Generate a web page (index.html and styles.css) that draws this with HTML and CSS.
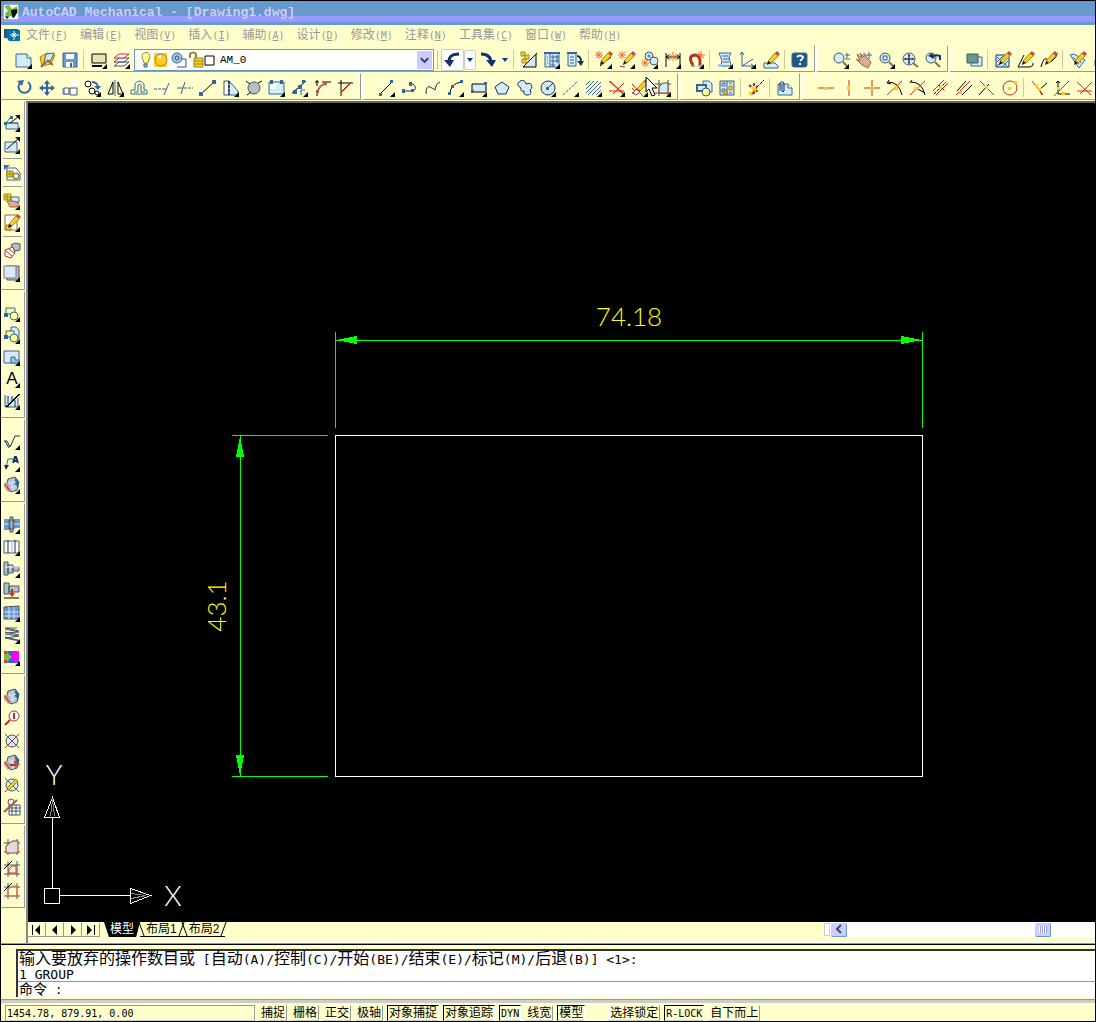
FILE: index.html
```
<!DOCTYPE html>
<html lang="zh-CN">
<head>
  <meta charset="UTF-8" />
  <meta name="viewport" content="width=device-width, initial-scale=1.0"/>
  <title>AutoCAD Mechanical - [Drawing1.dwg]</title>
  <link rel="stylesheet" href="styles.css">
</head>
<body>
  <!-- shared icon parts -->
  <svg class="defs" aria-hidden="true">
    <symbol id="pencil" viewBox="0 0 18 18"><path class="fy by" d="M6 10L13 2l3 3-7 7z"/><path class="fr n" d="M13 2l2-2 3 3-2 2z"/><path class="fk n" d="M6 10l3 2-4 2z"/></symbol>
    <symbol id="lens" viewBox="0 0 18 18"><path class="br t" d="M11 11l5 5"/><circle class="fb dk" cx="7" cy="7" r="5"/></symbol>
    <symbol id="gear" viewBox="0 0 18 18"><path class="fg dk" d="M5 3l7-2 4 5-2 8-6 2-5-5z"/><path class="fn n" d="M12 1l4 5-1 7-3-5z"/><path class="lt" d="M6 5l5 8M9 3l1 12M5 8l8-2M6 12l8-2"/><path class="fr2 n" d="M1 7l4 0 3 8-3 1-4-5z"/><path class="rr" d="M2 8l5 7"/></symbol>
    <symbol id="spark" viewBox="0 0 18 18"><path class="or" d="M4 0v8M0 4h8M1 1l6 6M7 1L1 7"/></symbol>
    <symbol id="grid" viewBox="0 0 18 18"><path class="dk" d="M5 1v16M14 1v16M1 5h16M1 14h16"/></symbol>
  </svg>

  <div class="window">
    <header class="titlebar">
      <svg class="app-icon" viewBox="0 0 16 16"><path class="fw" d="M0 0h16v16H0z"/><path class="fgr n" d="M1 2l5-1 3 4 5-3 1 7-4-1-3 4-5 2-1-5 3-2z"/><path class="fk n" d="M8 6l6-1v4l-3 5-2-1zM2 12l4 1-2 2z"/></svg>
      <h1>AutoCAD Mechanical - [Drawing1.dwg]</h1>
    </header>

    <nav class="menubar">
      <svg class="doc-icon" viewBox="0 0 16 14"><path class="fn2 n" d="M0 1h14v9H0z"/><path class="ft n" d="M3 2h13v11H5l-2-3z"/><path class="wt" d="M10 3v9M6 7h9M8 5l4 4M12 5L8 9"/></svg>
      <button>文件<span>(<u>F</u>)</span></button>
      <button>编辑<span>(<u>E</u>)</span></button>
      <button>视图<span>(<u>V</u>)</span></button>
      <button>插入<span>(<u>I</u>)</span></button>
      <button>辅助<span>(<u>A</u>)</span></button>
      <button>设计<span>(<u>D</u>)</span></button>
      <button>修改<span>(<u>M</u>)</span></button>
      <button>注释<span>(<u>N</u>)</span></button>
      <button>工具集<span>(<u>C</u>)</span></button>
      <button>窗口<span>(<u>W</u>)</span></button>
      <button>帮助<span>(<u>H</u>)</span></button>
    </nav>

    <div class="toolrow">
      <div class="group">
        <button class="tool fly" aria-label="新建"><svg viewBox="0 0 18 18"><path class="fb" d="M1 3h11l4 4v9H1z"/><path class="fw" d="M12 3v4h4"/></svg></button>
        <button class="tool" aria-label="打开"><svg viewBox="0 0 18 18"><path class="fy by" d="M2 6l7-4 8 2-4 9-9 2z"/><path class="fb" d="M8 3l8-1-3 7-7 3z"/><path class="br t" d="M3 16l5-5M9 9l6 5"/></svg></button>
        <button class="tool" aria-label="保存"><svg viewBox="0 0 18 18"><path class="fbb2" d="M2 2h14v14H2z"/><path class="fw n" d="M5 3h8v5H5zM5 11h7v5H5z"/><path class="fn n" d="M9 12h2v4H9z"/></svg></button>
        <i class="sep"></i>
        <button class="tool fly" aria-label="布局"><svg viewBox="0 0 18 18"><path class="fy3 k" d="M2 3h14v9H2z"/><path class="k t" d="M2 15h10"/></svg></button>
        <button class="tool fly" aria-label="图层"><svg viewBox="0 0 18 18"><path class="fw dk" d="M1 15l5-4h10l-5 4zM1 11l5-4h10l-5 4z"/><path class="fw r" d="M1 7l5-4h10l-5 4z"/></svg></button>
        <div class="layer">
          <select aria-label="图层"><option>AM_0</option></select>
          <svg class="layer-icons" viewBox="0 0 76 18"><path class="fy2 by" d="M3 6a4 4 0 1 1 7 2l-1 4H5L4 9z"/><path class="fg dk" d="M5 13h3v3H5z"/><path class="fy n" d="M15 2h13v14H15z"/><circle class="fy by" cx="22" cy="9" r="6"/><path class="fw n" d="M18 6l4-2v4z"/><path class="fw dk" d="M41 8h6v8h-9"/><circle class="ft2" cx="38" cy="7" r="5"/><circle class="dk" cx="38" cy="7" r="2"/><path class="by t" d="M51 7V3q3-3 6 0v4"/><path class="fy by" d="M55 7h9v9h-9z"/><path class="by" d="M55 10h9M55 13h9"/><path class="fw k" d="M66 5h9v9h-9z"/></svg>
          <svg class="chevron" viewBox="0 0 16 18"><path d="M4 7l4 4 4-4"/></svg>
        </div>
        <i class="sep"></i>
        <button class="tool raised" aria-label="放弃"><svg viewBox="0 0 18 18"><path class="nv t3" d="M5 12Q4 3 15 3"/><path class="fnv n" d="M0 9h10l-4 7z"/></svg></button>
        <button class="drop raised" aria-label="放弃列表"><svg viewBox="0 0 6 4"><path d="M0 0h6L3 4z"/></svg></button>
        <button class="tool" aria-label="重做"><svg viewBox="0 0 18 18"><path class="nv t3" d="M2 3q10 0 10 9"/><path class="fnv n" d="M7 9h10l-4 7z"/></svg></button>
        <button class="drop" aria-label="重做列表"><svg viewBox="0 0 6 4"><path d="M0 0h6L3 4z"/></svg></button>
        <i class="sep"></i>
        <button class="tool" aria-label="特性"><svg viewBox="0 0 18 18"><path class="fb k" d="M3 16L16 3v13z"/><path class="k" d="M3 16L17 2"/><path class="fy by" d="M1 1h4v4H1zM5 4h4v4H5zM2 8h4v4H2z"/></svg></button>
        <button class="tool fly" aria-label="设计中心"><svg viewBox="0 0 18 18"><path class="fb" d="M2 2h14v14H2z"/><path class="t" d="M1 2h16"/><path d="M7 2v14M4 6h1M4 9h1M4 12h1M9 5h2v2H9zM13 5h2v2h-2zM9 9h2v2H9zM13 9h2v2h-2zM9 13h2v2H9z"/></svg></button>
        <button class="tool" aria-label="明细"><svg viewBox="0 0 18 18"><path class="fb" d="M2 2h8v13H2z"/><path class="t" d="M1 2h10"/><path d="M4 6h4M4 9h4M4 12h4"/><path class="nv t" d="M11 5q4 0 4 6"/><path class="fnv n" d="M11 10h7l-3 5z"/></svg></button>
        <i class="sep"></i>
        <button class="tool fly" aria-label="编辑一"><svg viewBox="0 0 18 18"><path class="k" d="M5 15l11-9"/><use href="#pencil"/><use href="#spark"/></svg></button>
        <button class="tool fly" aria-label="编辑二"><svg viewBox="0 0 18 18"><path class="r" d="M2 15l5 1"/><use href="#pencil"/><use href="#spark"/></svg></button>
        <button class="tool fly" aria-label="编辑三"><svg viewBox="0 0 18 18"><circle class="fb dk" cx="8" cy="5" r="4"/><circle class="fb dk" cx="13" cy="10" r="4"/><circle class="fw dk" cx="8" cy="5" r="1"/><use class="low" href="#spark"/></svg></button>
        <button class="tool fly" aria-label="编辑尺寸"><svg viewBox="0 0 18 18"><path class="k" d="M2 2v14M16 2v14M2 6h14M5 4L2 6l3 2M13 4l3 2-3 2"/><path class="or" d="M9 1v9M5 3l8 6M13 3L5 9"/></svg></button>
        <button class="tool fly" aria-label="超级编辑"><svg viewBox="0 0 18 18"><path class="rr t3" d="M6 14Q0 5 8 4q6 0 5 10"/><path class="dk" d="M4 15h4M11 15h5"/><path class="or" d="M14 0v8M10 4h8M11 1l6 6"/></svg></button>
        <i class="sep"></i>
        <button class="tool fly" aria-label="列表"><svg viewBox="0 0 18 18"><path class="fb" d="M3 2h12l-2 4 2 9H5l1-5z"/><path d="M6 5h6M7 8h6M7 11h6"/><path class="ft2 n" d="M2 13h4v3H2z"/></svg></button>
        <button class="tool fly" aria-label="坐标"><svg viewBox="0 0 18 18"><path d="M3 1v14h12M3 15L14 8M1 4l2-3 2 3M12 13l3 2-3 2"/></svg></button>
        <button class="tool" aria-label="绘图"><svg viewBox="0 0 18 18"><path class="fb" d="M2 12h11l3 3v2H2z"/><use href="#pencil"/></svg></button>
        <i class="sep"></i>
        <button class="tool" aria-label="帮助"><svg viewBox="0 0 18 18"><rect class="fn2" x="1" y="2" width="15" height="14" rx="2"/><path class="wt t" d="M6 6q3-3 6 0 0 2-3 4M9 12v2"/></svg></button>
      </div>
      <div class="group">
        <button class="tool fly" aria-label="实时缩放"><svg viewBox="0 0 18 18"><use href="#lens"/><path d="M13 4h5M15 2v5M13 8h5"/></svg></button>
        <button class="tool" aria-label="平移"><svg viewBox="0 0 18 18"><path class="fh br" d="M2 3l5 4-2-5 4 4V2l3 5 4 4-3 6-6-3-6-6 4 2z"/><path d="M14 1v7M11 4h6"/></svg></button>
        <button class="tool fly" aria-label="窗口缩放"><svg viewBox="0 0 18 18"><use href="#lens"/><path d="M5 5h4v4H5z"/></svg></button>
        <button class="tool" aria-label="范围缩放"><svg viewBox="0 0 18 18"><path class="br t" d="M12 12l5 4"/><circle class="fb dk" cx="8" cy="8" r="6"/><path class="k" d="M8 4v8M4 8h8M7 4h2M7 12h2M4 7v2M12 7v2"/></svg></button>
        <button class="tool" aria-label="上一个缩放"><svg viewBox="0 0 18 18"><use href="#lens"/><path class="nv t" d="M8 7q2-4 8-2v4"/><path class="fnv n" d="M4 5l4-3 3 6z"/></svg></button>
      </div>
      <div class="group">
        <button class="tool" aria-label="绘图次序"><svg viewBox="0 0 18 18"><path class="fb" d="M6 6h11v9H6z"/><path class="fgn dk" d="M2 3h11v9H2z"/></svg></button>
        <i class="sep"></i>
        <button class="tool" aria-label="编辑填充"><svg viewBox="0 0 18 18"><path class="fb nv" d="M2 4h13v12H2z"/><path d="M3 15L14 5M3 11l6-6M9 15l5-5M3 6l10 9"/><use href="#pencil"/></svg></button>
        <button class="tool" aria-label="编辑多段线"><svg viewBox="0 0 18 18"><path class="k" d="M1 16h12q4-1 3-4M1 16L7 4"/><use href="#pencil"/></svg></button>
        <button class="tool" aria-label="编辑样条"><svg viewBox="0 0 18 18"><path class="k" d="M1 16Q4 4 8 9q1 4 5 0 4-3 4-7"/><use href="#pencil"/></svg></button>
        <i class="sep"></i>
        <button class="tool" aria-label="编辑属性"><svg viewBox="0 0 18 18"><path class="fb" d="M1 4l4-1 11 6-6 8z"/><path d="M4 6l6 7M8 6l4 6"/><use href="#pencil"/></svg></button>
        <button class="tool" aria-label="块"><svg viewBox="0 0 18 18"><path class="fb" d="M3 9l5-3 6 3v6H3z"/></svg></button>
      </div>
    </div>

    <div class="toolrow">
      <div class="group">
        <button class="tool" aria-label="旋转"><svg viewBox="0 0 18 18"><path class="t" d="M6 3a6 6 0 1 0 7 0"/><path class="fn n" d="M2 2l7-1-2 6z"/></svg></button>
        <button class="tool" aria-label="移动"><svg viewBox="0 0 18 18"><path class="t" d="M9 3v12M3 9h12"/><path class="fn n" d="M9 1l3 4H6zM9 17l3-4H6zM1 9l4-3v6zM17 9l-4-3v6z"/></svg></button>
        <button class="tool" aria-label="缩放"><svg viewBox="0 0 18 18"><path class="fg n" d="M1 9h7v7H1z"/><path class="fw n" d="M10 1h7v6h-7z"/><path class="fw dk" d="M3 9h5v6H3zM9 9h7v7H9z"/></svg></button>
        <button class="tool fly" aria-label="复制"><svg viewBox="0 0 18 18"><circle class="fw k" cx="4" cy="5" r="3"/><circle class="fw k" cx="8" cy="12" r="3"/><circle class="fw k" cx="13" cy="14" r="2"/><path class="t" d="M8 3q5 0 6 5"/><path class="fn n" d="M10 7h7l-3 4z"/></svg></button>
        <button class="tool fly" aria-label="镜像"><svg viewBox="0 0 18 18"><path class="k" d="M1 15L6 3v12zM16 15L11 3v12z"/><path d="M8 1v16"/></svg></button>
        <button class="tool" aria-label="偏移"><svg viewBox="0 0 18 18"><path d="M1 15v-4h4V5q4-6 9 0v6h3v4z"/><path d="M4 13h4V6q2-2 3 0v7h4"/></svg></button>
        <button class="tool" aria-label="修剪"><svg viewBox="0 0 18 18"><path class="dash" d="M1 10h9"/><path d="M10 10h3M11 16l5-12"/></svg></button>
        <button class="tool" aria-label="延伸"><svg viewBox="0 0 18 18"><path d="M1 9h6M5 15l4-12"/><path class="dash" d="M8 9h9"/></svg></button>
        <button class="tool" aria-label="打断"><svg viewBox="0 0 18 18"><path class="k" d="M2 15L15 3"/><path class="fn n" d="M0 13h4v4H0zM13 1h4v4h-4z"/></svg></button>
        <button class="tool fly" aria-label="拉伸"><svg viewBox="0 0 18 18"><path class="fw dk" d="M2 2h5v14H2z"/><path class="fb" d="M7 2l9 10v4H7z"/><path class="k dash" d="M7 2v14"/></svg></button>
        <button class="tool" aria-label="圆"><svg viewBox="0 0 18 18"><circle class="fg dk" cx="9" cy="9" r="6"/><path class="k" d="M1 2l4 3M2 16l4-3M13 4l4-2"/></svg></button>
        <button class="tool fly" aria-label="打断于点"><svg viewBox="0 0 18 18"><path class="fb" d="M1 3h15v12H1z"/><path class="fw n" d="M2 4h8l-3 6H2z"/><path class="fn n" d="M2 1h3v4H2zM12 1h3v4h-3z"/></svg></button>
        <button class="tool fly" aria-label="阵列"><svg viewBox="0 0 18 18"><path class="k" d="M1 14L15 2"/><path class="fn n" d="M2 11h4v4H2zM7 6h4v4H7zM11 1h3v3h-3z"/><path d="M10 16v-5h4"/></svg></button>
        <button class="tool" aria-label="圆角"><svg viewBox="0 0 18 18"><path class="k" d="M3 1v6M1 3h4M8 3h9M3 11v6"/><path class="r" d="M3 14Q4 5 13 4M4 14Q5 6 13 5"/></svg></button>
        <button class="tool" aria-label="倒角"><svg viewBox="0 0 18 18"><path class="k" d="M4 1v16M1 4h15"/><path class="r" d="M4 13L13 4M5 13L14 4"/></svg></button>
      </div>
      <div class="group">
        <button class="tool fly" aria-label="直线"><svg viewBox="0 0 18 18"><path class="k" d="M2 15L14 3"/><path class="fn n" d="M1 14h3v3H1zM12 1h3v3h-3z"/></svg></button>
        <button class="tool" aria-label="多段线"><svg viewBox="0 0 18 18"><path class="nv" d="M2 12h10q5-3 0-7h-2"/><path class="fn n" d="M1 10h3v4H1zM8 3h3v4H8zM10 10h3v3h-3z"/></svg></button>
        <button class="tool" aria-label="样条曲线"><svg viewBox="0 0 18 18"><path class="nv" d="M2 15q0-9 4-7t5 3q1-7 5-8"/></svg></button>
        <button class="tool fly" aria-label="圆弧"><svg viewBox="0 0 18 18"><path class="k" d="M3 15Q3 5 14 3"/><path class="fn n" d="M1 13h3v3H1zM4 6h3v3H4zM13 1h3v3h-3z"/></svg></button>
        <button class="tool fly" aria-label="矩形"><svg viewBox="0 0 18 18"><path class="fb k" d="M2 5h14v8H2z"/><path class="fn n" d="M1 11h3v3H1zM14 3h3v3h-3z"/></svg></button>
        <button class="tool" aria-label="多边形"><svg viewBox="0 0 18 18"><path class="fb nv" d="M9 3l7 5-3 7H5L2 8z"/></svg></button>
        <button class="tool" aria-label="修订云线"><svg viewBox="0 0 18 18"><path class="fb nv" d="M5 9Q-1 6 4 2q5-2 6 3 5-2 6 2 0 3-2 4 3 5-3 5-4 0-3-4-4 1-3-3"/></svg></button>
        <button class="tool fly" aria-label="圆"><svg viewBox="0 0 18 18"><circle class="fb nv" cx="9" cy="9" r="7"/><path class="nv" d="M9 9l5-5"/><path class="fn n" d="M7 8h3v3H7z"/></svg></button>
        <button class="tool fly" aria-label="中心线"><svg viewBox="0 0 18 18"><path class="dash" d="M1 16L16 2"/></svg></button>
        <button class="tool fly" aria-label="图案填充"><svg viewBox="0 0 18 18"><path d="M1 6l4-4M1 10l8-8M1 14l12-12M3 16L16 3M7 16l9-9M11 16l5-5"/></svg></button>
        <button class="tool fly" aria-label="中心十字"><svg viewBox="0 0 18 18"><path class="r" d="M1 2l14 13M1 12h15M16 4L5 15M2 2l14 13"/></svg></button>
        <button class="tool fly" aria-label="删除"><svg viewBox="0 0 18 18"><path class="r" d="M1 5l11 12M1 9l6 6"/><path class="k" d="M1 14h6"/><use href="#pencil"/><path class="fw rr" d="M5 10l4 3-4 3-3-2z"/></svg></button>
        <button class="tool fly" aria-label="轮廓"><svg viewBox="0 0 18 18"><use href="#grid"/><path class="fb rr" d="M5 14V8l4-4h5v10z"/></svg></button>
      </div>
      <div class="group">
        <button class="tool" aria-label="插入块"><svg viewBox="0 0 18 18"><path class="fb" d="M8 2h6l3 3v8H8z"/><path class="fb t" d="M2 6h9v6H2z"/><circle class="fy2 dk" cx="11" cy="13" r="4"/></svg></button>
        <button class="tool" aria-label="零件库"><svg viewBox="0 0 18 18"><path class="fb dk" d="M2 2h14v14H2z"/><path d="M9 2v14M4 4h3v3H4zM4 10h3v3H4zM11 4h3M11 14h3"/><path class="fy by" d="M11 7h3v4h-3zM6 12h3v3H6z"/></svg></button>
        <i class="sep"></i>
        <button class="tool" aria-label="分解"><svg viewBox="0 0 18 18"><path class="rr t dash" d="M2 6l9 7M4 16l7-10M7 4v12"/><path class="fy n" d="M5 8h4v4H5zM2 13h3v3H2z"/><path class="k dash" d="M10 8l7-7"/></svg></button>
        <i class="sep"></i>
        <button class="tool" aria-label="附着"><svg viewBox="0 0 18 18"><path class="fb" d="M2 5h10l4 4v7H2z"/><path class="fw" d="M12 5v4h4"/><path class="nv" d="M4 12V4q2-3 4 0v8q-1 2-2 0V6"/></svg></button>
      </div>
      <div class="group">
        <button class="tool" aria-label="水平构造线"><svg viewBox="0 0 18 18"><path class="r" d="M1 9h16"/><path class="fy n" d="M7 8h4v3H7z"/></svg></button>
        <button class="tool" aria-label="垂直构造线"><svg viewBox="0 0 18 18"><path class="rr" d="M9 1v16"/><path class="fy n" d="M7 7h3v4H7z"/></svg></button>
        <button class="tool" aria-label="十字构造线"><svg viewBox="0 0 18 18"><path class="rr" d="M9 1v16M1 9h16"/><path class="fy n" d="M7 8h4v3H7z"/></svg></button>
        <button class="tool" aria-label="角度线"><svg viewBox="0 0 18 18"><path class="k" d="M2 3q11 0 14 13M3 1L1 4l4 1"/><path class="r" d="M1 16L16 2"/><path class="fy n" d="M8 7h4v4H8z"/></svg></button>
        <button class="tool" aria-label="相对角度线"><svg viewBox="0 0 18 18"><path class="k" d="M2 3q11 0 14 13M3 1L1 4M7 9l9 5"/><path class="r" d="M1 16L16 2"/><path class="fy n" d="M5 8h4v3H5z"/></svg></button>
        <button class="tool" aria-label="平行线"><svg viewBox="0 0 18 18"><path class="r" d="M1 12L12 1M4 16L16 4"/><path class="k dash" d="M2 15L14 3M7 6l6 6"/><path class="fy n" d="M7 7h3v3H7z"/></svg></button>
        <button class="tool" aria-label="半距平行线"><svg viewBox="0 0 18 18"><path class="r" d="M1 16L15 2"/><path class="k" d="M2 12l9-10M7 16L17 6"/><path class="fy n" d="M4 12h3v3H4z"/></svg></button>
        <button class="tool" aria-label="垂线"><svg viewBox="0 0 18 18"><path class="k" d="M1 16L11 5"/><path class="r" d="M2 2l14 14"/><path class="fy n" d="M7 7h3v3H7z"/></svg></button>
        <button class="tool" aria-label="构造圆"><svg viewBox="0 0 18 18"><circle class="r" cx="9" cy="9" r="7"/><path class="fy n" d="M7 8h3v3H7zM13 2h3v3h-3z"/></svg></button>
        <i class="sep"></i>
        <button class="tool" aria-label="切线"><svg viewBox="0 0 18 18"><path class="k" d="M9 11l8-7M9 10l3 6"/><path class="r" d="M2 2l11 14"/><path class="fy n" d="M5 5h3v3H5zM8 9h3v3H8z"/></svg></button>
        <button class="tool" aria-label="角平分线"><svg viewBox="0 0 18 18"><path class="k" d="M5 2v13h12M3 4l2-2 2 2"/><path class="r" d="M1 17L16 2"/><path class="fy n" d="M9 13h3v3H9zM4 8h3v3H4z"/></svg></button>
        <button class="tool" aria-label="构造线相交"><svg viewBox="0 0 18 18"><path class="r" d="M1 3l14 13M1 12h15M16 3L4 15"/></svg></button>
      </div>
    </div>

    <div class="workspace">
      <aside class="sidebar">
        <div class="vgroup">
          <button class="tool fly" aria-label="三维一"><svg viewBox="0 0 18 18"><path class="fb" d="M3 9h12v6H3z"/><path d="M3 9l5-6M3 9l12 0"/><path class="k" d="M7 9l8-6"/><path class="fk n" d="M12 1h5v5z"/><path class="fn n" d="M1 8h3v3H1zM7 2h3v3H7z"/></svg></button>
          <button class="tool fly" aria-label="三维二"><svg viewBox="0 0 18 18"><path class="fb" d="M2 6h12v10H2z"/><path class="k" d="M4 13L15 3"/><path class="fk n" d="M12 1h5v5z"/></svg></button>
          <i class="hsep"></i>
          <button class="tool" aria-label="视图"><svg viewBox="0 0 18 18"><path class="fw" d="M4 4h9l4 5v7H4z"/><path class="fbb n" d="M1 1h6L1 6z"/><path class="fy by" d="M4 7h6v6H4z"/><path class="by" d="M7 7v6M4 10h6"/><circle class="fy2 dk" cx="13" cy="12" r="3"/></svg></button>
          <i class="hsep"></i>
          <button class="tool fly" aria-label="零件"><svg viewBox="0 0 18 18"><path class="fy by" d="M1 2h7v6H1zM4 2v6M1 5h7"/><path class="fb" d="M8 5h8v5H8z"/><path class="fh br" d="M4 9h7l5 2-2 4H7z"/></svg></button>
          <button class="tool fly" aria-label="零件编辑"><svg viewBox="0 0 18 18"><path class="fw br" d="M2 1h12v15H2z"/><path class="fy by" d="M3 11h5v5H3z"/><use href="#pencil"/></svg></button>
          <i class="hsep"></i>
          <button class="tool" aria-label="装配"><svg viewBox="0 0 18 18"><path class="fg dk" d="M8 3l4-2 5 1v6l-5 1z"/><path class="fw rr" d="M2 8l8-3 2 6-4 5-6-2z"/><path class="rr" d="M3 9l6 5M6 7l5 4"/></svg></button>
          <button class="tool fly" aria-label="图框"><svg viewBox="0 0 18 18"><path class="fg dk" d="M4 2h12v14H4z"/><path class="fb pu" d="M1 2h12v12H1z"/></svg></button>
        </div>
        <div class="vgroup">
          <button class="tool fly" aria-label="创建块"><svg viewBox="0 0 18 18"><path class="fy2" d="M3 4h9v6H3z"/><circle class="fy2" cx="11" cy="12" r="4"/><path class="fn n" d="M1 9h4v4H1z"/></svg></button>
          <button class="tool fly" aria-label="插入"><svg viewBox="0 0 18 18"><path class="fb" d="M8 1h5l3 3v9H8z"/><path class="fy2" d="M3 5h8v6H3z"/><circle class="fy2" cx="11" cy="12" r="4"/><path class="fn n" d="M1 9h4v4H1z"/></svg></button>
          <button class="tool fly" aria-label="区域"><svg viewBox="0 0 18 18"><path class="fb" d="M1 3h15v12H1z"/><path class="ft2" d="M8 9h4v3h4v3H8z"/></svg></button>
          <button class="tool fly letter" aria-label="多行文字">A</button>
          <button class="tool fly" aria-label="尺寸标注"><svg viewBox="0 0 18 18"><path class="fb dk" d="M2 3v12h13V6"/><path class="nv" d="M5 4v8M9 4v5M3 13l3 2M12 8v7"/><path class="k" d="M3 15L16 2M4 15L17 2"/></svg></button>
        </div>
        <div class="vgroup">
          <button class="tool fly" aria-label="表面粗糙度"><svg viewBox="0 0 18 18"><path class="nv" d="M1 9h3l3 6 5-11h5M2 9l4 7"/></svg></button>
          <button class="tool fly" aria-label="引线"><svg viewBox="0 0 18 18"><path d="M3 14L5 5h5"/><path class="fnv n" d="M1 11h5l-3 5z"/><path class="nv t" d="M10 9l2-6h1l2 6M11 7h4"/></svg></button>
          <button class="tool fly" aria-label="引出序号"><svg viewBox="0 0 18 18"><use href="#gear"/></svg></button>
        </div>
        <div class="vgroup">
          <button class="tool fly" aria-label="螺钉连接"><svg viewBox="0 0 18 18"><path class="fbb2 n" d="M1 3h5v11H1zM11 3h6v9h-6z"/><path class="fg dk" d="M6 4h5v9H6zM7 1h3v15H7z"/><path class="lt" d="M1 8h5M11 8h6"/></svg></button>
          <button class="tool fly" aria-label="孔"><svg viewBox="0 0 18 18"><path class="fw dk" d="M1 3h15v12H1z"/><path class="nv" d="M5 2v13M12 2v13"/><path class="g" d="M9 2v14"/></svg></button>
          <button class="tool fly" aria-label="轴生成器"><svg viewBox="0 0 18 18"><path class="fg dk" d="M1 2h4v13H1zM5 5h5v8H5zM10 7h6v4h-6z"/><path class="wt" d="M2 7h14"/></svg></button>
          <button class="tool" aria-label="轴承"><svg viewBox="0 0 18 18"><path class="fg dk" d="M1 1h5v11H1zM6 4h10v6H6z"/><path class="r t" d="M9 7v5"/><path class="fred n" d="M6 11h6l-3 4z"/><path class="k" d="M1 16h15"/></svg></button>
          <button class="tool fly" aria-label="有限元"><svg viewBox="0 0 18 18"><path class="fbb2 dk" d="M1 3l15-1v13H1z"/><path class="lt" d="M1 8h15M1 12h15M6 3v12M11 3v12"/></svg></button>
          <button class="tool fly" aria-label="弹簧"><svg viewBox="0 0 18 18"><path class="dk" d="M2 2h12M2 3l14 3M16 6L2 7M2 8l14 2M16 10L2 12M2 12l14 3M3 2l13 3M2 6l14 3M2 11l13 3"/></svg></button>
          <button class="tool fly" aria-label="应力分析"><svg viewBox="0 0 18 18"><path class="fgr n" d="M1 3h6v12H1z"/><path class="fbb n" d="M4 3h12v12H4l4-6z"/><path class="fm n" d="M10 3h6v9l-4 3-4-6z"/><path class="fr n" d="M1 3h3v3H1zM1 12h3v3H1z"/></svg></button>
        </div>
        <div class="vgroup">
          <button class="tool" aria-label="零件参照"><svg viewBox="0 0 18 18"><use href="#gear"/></svg></button>
          <button class="tool" aria-label="引出"><svg viewBox="0 0 18 18"><path class="rr t" d="M2 15l5-5"/><circle class="fw rr" cx="11" cy="6" r="5"/><path class="rr t" d="M11 3v6"/></svg></button>
          <button class="tool" aria-label="删除引出"><svg viewBox="0 0 18 18"><circle class="fb dk" cx="9" cy="9" r="6"/><path class="rr" d="M2 2l14 14M16 2L2 16"/></svg></button>
          <button class="tool" aria-label="编辑零件参照"><svg viewBox="0 0 18 18"><use href="#gear"/><path class="rr t" d="M7 11h7"/><path class="fr n" d="M11 6l6 4-5 4z"/></svg></button>
          <button class="tool" aria-label="编辑引出"><svg viewBox="0 0 18 18"><circle class="fb dk" cx="9" cy="9" r="6"/><path class="rr" d="M2 2l14 14M2 16l3-3"/><path class="fy by" d="M4 12L13 3l2 2-9 9z"/></svg></button>
          <button class="tool" aria-label="明细表"><svg viewBox="0 0 18 18"><path class="fw dk" d="M6 7h11v10H6zM6 10h11M6 13h11M9 7v10M13 7v10"/><circle class="fw rr" cx="8" cy="4" r="3"/><path class="br t" d="M1 14L14 2"/></svg></button>
        </div>
        <div class="vgroup">
          <button class="tool" aria-label="外轮廓"><svg viewBox="0 0 18 18"><use href="#grid"/><path class="fgl rr" d="M3 15V8l6-5h6v12z"/></svg></button>
          <button class="tool" aria-label="内轮廓"><svg viewBox="0 0 18 18"><use href="#grid"/><path class="r" d="M6 13V9l3-3h4v7z"/><path class="k" d="M1 9l8-8"/></svg></button>
          <button class="tool" aria-label="轮廓线"><svg viewBox="0 0 18 18"><use href="#grid"/><path class="or" d="M5 14V8l4-4h5v10z"/><path class="k" d="M1 9l8-8"/></svg></button>
        </div>
      </aside>

      <main class="view">
        <svg class="drawing">
          <g transform="translate(-28 -103)">
            <path class="outline" d="M335.500 435.500h587v341h-587z"/>
            <g class="dim">
              <path d="M335.500 332v96M922.500 332v96M336 340.500h586M232 435.500h96M232 776.500h96M240.500 436v340"/>
              <path class="head" d="M336 340l21-4v8zM922 340l-21-4v8zM240 436l-4 21h8zM240 776l-4-21h8z"/>
            </g>
            <text class="dimtext" x="629" y="326" text-anchor="middle">74.18</text>
            <text class="dimtext" transform="translate(226 606) rotate(-90)" text-anchor="middle">43.1</text>
            <g class="ucs">
              <path d="M44.500 888.500h15v15h-15zM52.500 888V817M60 895.500h70"/>
              <path d="M44.500 817.500h15l-7-20zM130.500 888.500v15l20-8z"/>
              <path class="shade" d="M50.500 816l2-16M54.500 816l-2-16M131 893.500l15 2M131 898.500l15-3"/>
            </g>
            <text class="axis" x="54" y="785" text-anchor="middle">Y</text>
            <text class="axis" x="173" y="906" text-anchor="middle">X</text>
          </g>
        </svg>

        <div class="tabrow">
          <div class="tabnav">
            <button aria-label="第一个"><svg viewBox="0 0 10 10"><path d="M0 0h1v10H0zM8 0v10L3 5z"/></svg></button>
            <button aria-label="上一个"><svg viewBox="0 0 10 10"><path d="M7 0v10L2 5z"/></svg></button>
            <button aria-label="下一个"><svg viewBox="0 0 10 10"><path d="M3 0v10l5-5z"/></svg></button>
            <button aria-label="最后一个"><svg viewBox="0 0 10 10"><path d="M1 0v10l5-5zM8 0h1v10H8z"/></svg></button>
          </div>
          <div class="tabs">
            <button class="tab active">模型</button>
            <button class="tab">布局1</button>
            <button class="tab">布局2</button>
          </div>
          <div class="scroll">
            <span class="splitter"></span>
            <button class="arrow" aria-label="向左"><svg viewBox="0 0 8 10"><path d="M6 1L2 5l4 4"/></svg></button>
            <span class="thumb"></span>
          </div>
        </div>
      </main>
    </div>

    <section class="command">
      <div class="console">
        <p>输入要放弃的操作数目或<span> [</span>自动<span>(A)/</span>控制<span>(C)/</span>开始<span>(BE)/</span>结束<span>(E)/</span>标记<span>(M)/</span>后退<span>(B)] &lt;1&gt;:</span></p>
        <p><span>1 GROUP</span></p>
        <div class="prompt">
          <label for="cmd">命令<span> :</span></label>
          <input type="text" id="cmd">
        </div>
      </div>
    </section>

    <footer class="statusbar">
      <div class="coords">1454.78, 879.91, 0.00</div>
      <button>捕捉</button>
      <button>栅格</button>
      <button>正交</button>
      <button>极轴</button>
      <button class="on">对象捕捉</button>
      <button class="on">对象追踪</button>
      <button class="on en">DYN</button>
      <button>线宽</button>
      <button class="on">模型</button>
      <i class="space"></i>
      <button>选择锁定</button>
      <button class="on en">R-LOCK</button>
      <button>自下而上</button>
    </footer>

    <svg class="cursor" viewBox="0 0 13 21"><path d="M1 1v15l3-3 3 7 3-1-3-7h5z"/></svg>
  </div>
</body>
</html>
```
FILE: styles.css
```
* {
  margin: 0; padding: 0; box-sizing: border-box;
}
body {
  font-family: "DejaVu Sans Mono", "Noto Sans CJK SC", monospace;
  font-size: 12px;
  background-color: #ffffcc;
  overflow: hidden;
}
button {
  border: none;
  background: none;
  font-family: inherit;
  font-size: inherit;
  color: inherit;
}
svg {
  display: block;
}
.defs {
  position: absolute;
  width: 0;
  height: 0;
}
.window {
  position: relative;
  display: flex;
  flex-direction: column;
  height: 100vh;
  border: 1px solid #000;
  background-color: #ffffcc;
  overflow: hidden;
}

/* title and menu */
.titlebar {
  display: flex;
  align-items: center;
  height: 24px;
  flex: none;
  padding-left: 2px;
  padding-bottom: 2px;
  gap: 3px;
  background: linear-gradient(#6699cc 15px, #9999ff 15px, #9999ff 21px, #6699cc 21px);
}
.titlebar h1 {
  font-family: "Liberation Mono", monospace;
  font-size: 13px;
  font-weight: bold;
  color: #ccccff;
  white-space: nowrap;
}
.app-icon {
  width: 16px;
  height: 16px;
}
.menubar {
  display: flex;
  align-items: center;
  height: 20px;
  flex: none;
  padding-left: 3px;
}
.doc-icon {
  width: 16px;
  height: 14px;
  margin-right: 6px;
}
.menubar button {
  margin-right: 12px;
  color: #999999;
  line-height: 18px;
  white-space: nowrap;
}
.menubar span {
  font-size: 10px;
}

/* toolbars */
.toolrow {
  display: flex;
  flex: none;
  height: 28px;
  overflow: hidden;
}
.group {
  display: flex;
  align-items: center;
  flex: none;
  height: 27px;
  padding: 2px 3px 0 11px;
  border-top: 1px solid #fff;
  border-bottom: 1px solid #999;
  border-right: 1px solid #999;
  margin-right: 1px;
}
.group + .group {
  border-left: 2px solid #fff;
}
.group:last-child {
  flex: 1 0 auto;
  border-right: none;
}
.tool {
  position: relative;
  display: flex;
  align-items: center;
  justify-content: center;
  flex: none;
  width: 23px;
  height: 22px;
}
.tool svg {
  width: 18px;
  height: 18px;
}
.fly::after {
  content: "";
  position: absolute;
  right: 3px;
  bottom: 2px;
  border-left: 5px solid transparent;
  border-bottom: 5px solid #000;
}
.raised {
  background-color: #fff;
  border: 1px solid #ccc;
  border-radius: 2px;
}
.sep {
  flex: none;
  width: 1px;
  height: 19px;
  margin: 0 3px 0 2px;
  background-color: #cccc99;
}
.drop {
  display: flex;
  align-items: center;
  justify-content: center;
  width: 12px;
  height: 20px;
}
.drop svg {
  width: 6px;
  height: 4px;
  fill: #003399;
}
.letter {
  font-family: "Liberation Sans", sans-serif;
  font-size: 17px;
  color: #000;
}
.layer {
  position: relative;
  width: 300px;
  margin: 0 1px;
}
.layer select {
  display: block;
  width: 100%;
  height: 22px;
  padding-left: 85px;
  border: 1px solid #6699cc;
  border-radius: 0;
  appearance: none;
  background-color: #fff;
  color: #000;
  font-family: "Liberation Mono", monospace;
  font-size: 11px;
}
.layer-icons {
  position: absolute;
  left: 5px;
  top: 2px;
  width: 76px;
  height: 18px;
}
.chevron {
  position: absolute;
  right: 2px;
  top: 2px;
  width: 15px;
  height: 18px;
  background-color: #ccccff;
}
.chevron path {
  stroke: #336;
  stroke-width: 2;
}

/* icon colours */
.tool svg, .layer-icons, .chevron, .defs, .app-icon, .doc-icon {
  fill: none;
  stroke: #336699;
}
.t { stroke-width: 2; }
.t3 { stroke-width: 3; }
.n { stroke: none; }
.k { stroke: #000; }
.dk { stroke: #445566; }
.g { stroke: #aaa; }
.r { stroke: #dd2222; }
.rr { stroke: #aa3333; }
.or { stroke: #ff6633; }
.br { stroke: #996644; }
.by { stroke: #998822; }
.pu { stroke: #996699; }
.nv { stroke: #113366; }
.lt { stroke: #cce6ff; }
.wt { stroke: #fff; }
.dash { stroke-dasharray: 3 1; }
.fw { fill: #fff; }
.fk { fill: #111; }
.fb { fill: #d5ebf7; }
.fbb { fill: #3366cc; }
.fbb2 { fill: #6699cc; }
.fn { fill: #336699; }
.fn2 { fill: #225588; }
.fnv { fill: #113366; }
.ft { fill: #0077aa; }
.ft2 { fill: #99ccdd; }
.fg { fill: #b4c0c8; }
.fgl { fill: #dddddd; }
.fy { fill: #ffcc22; }
.fy2 { fill: #ffff99; }
.fy3 { fill: #e6e6b3; }
.fr { fill: #cc4444; }
.fr2 { fill: #cc9999; }
.fred { fill: #ee2222; }
.fh { fill: #ddaa99; }
.fgr { fill: #77bb44; }
.fgn { fill: #669988; }
.fm { fill: #ff00ff; }
.low { transform: translate(0, 8px); }

/* left toolbars and drawing */
.workspace {
  display: flex;
  flex: 1;
  min-height: 0;
}
.sidebar {
  flex: none;
  width: 25px;
  overflow: hidden;
}
.vgroup {
  display: flex;
  flex-direction: column;
  width: 24px;
  padding: 10px 0 5px;
  border-top: 1px solid #fff;
  border-right: 1px solid #999;
  border-bottom: 1px solid #999;
  margin-bottom: 1px;
}
.vgroup .tool {
  width: 22px;
}
.hsep {
  height: 1px;
  margin: 2px 2px 3px;
  background-color: #999;
}
.view {
  display: flex;
  flex-direction: column;
  flex: 1;
  min-width: 0;
  border-left: 2px solid #888;
  border-top: 2px solid #666;
}
.drawing {
  flex: 1;
  width: 100%;
  min-height: 0;
  background-color: #000;
}
.drawing path {
  fill: none;
  shape-rendering: crispEdges;
}
.outline, .ucs {
  stroke: #fff;
}
.dim {
  stroke: #00ff00;
}
.drawing .head {
  fill: #00ff00;
  stroke: none;
}
.shade {
  stroke: #888;
}
.dimtext {
  font-family: Lato, sans-serif;
  font-weight: 300;
  font-size: 26px;
  fill: #ffff00;
}
.axis {
  font-family: Lato, sans-serif;
  font-weight: 300;
  font-size: 28px;
  fill: #fff;
}

/* layout tabs */
.tabrow {
  display: flex;
  flex: none;
  height: 21px;
  border-bottom: 2px solid #fff;
  padding-bottom: 3px;
}
.tabnav {
  display: flex;
}
.tabnav button {
  display: flex;
  align-items: center;
  justify-content: center;
  width: 18px;
  height: 15px;
  border-right: 1px solid #999;
  border-bottom: 1px solid #999;
  border-top: 1px solid #fff;
}
.tabnav svg {
  width: 10px;
  height: 10px;
}
.tabs {
  display: flex;
  flex: 1;
  padding-left: 4px;
}
.tab {
  position: relative;
  height: 15px;
  padding: 0 6px;
  font-family: "Liberation Sans", "Noto Sans CJK SC", sans-serif;
  line-height: 13px;
  color: #000;
  border-bottom: 1px solid #000;
}
.tab::before, .tab::after {
  content: "";
  position: absolute;
  top: 0;
  bottom: 0;
  width: 1px;
  background-color: #000;
}
.tab::before {
  left: 1px;
  transform: skewX(20deg);
}
.tab::after {
  right: 1px;
  transform: skewX(-20deg);
}
.tab.active {
  color: #fff;
  background-color: #000;
  clip-path: polygon(0 0, 100% 0, 32px 100%, 5px 100%);
}
.scroll {
  display: flex;
  align-items: center;
  width: 272px;
  height: 15px;
  padding-left: 1px;
  background-color: #fff;
}
.splitter {
  width: 6px;
  height: 13px;
  border: 1px solid #ccc;
  margin-right: 1px;
}
.arrow, .thumb {
  width: 16px;
  height: 14px;
  border-right: 1px solid #6699cc;
  border-bottom: 1px solid #6699cc;
  border-radius: 2px;
  background-color: #ccccff;
}
.arrow svg {
  width: 8px;
  height: 10px;
  margin: 0 auto;
  fill: none;
  stroke: #446;
  stroke-width: 2;
}
.thumb {
  display: flex;
  align-items: center;
  justify-content: center;
  margin: 0 44px 0 auto;
}
.thumb::before {
  content: "";
  width: 8px;
  height: 7px;
  background: repeating-linear-gradient(90deg, #fff 0, #fff 1px, #9999cc 1px, #9999cc 2px);
}

/* command line */
.command {
  flex: none;
  padding: 4px 0 2px 15px;
  border-top: 1px solid #999;
  box-shadow: inset 0 1px 0 #000;
}
.console {
  margin-top: 1px;
  border-left: 2px solid #333;
  border-top: 2px solid #333;
  background-color: #fff;
  color: #000;
}
.console p {
  height: 15px;
  line-height: 15px;
  padding-left: 1px;
  font-size: 16px;
  white-space: nowrap;
}
.console span {
  font-size: 13px;
  white-space: pre;
}
.prompt {
  display: flex;
  align-items: center;
  height: 16px;
  padding-left: 1px;
  border-top: 1px solid #999;
}
.prompt label {
  font-size: 14px;
  line-height: 15px;
  white-space: nowrap;
}
.prompt input {
  flex: 1;
  min-width: 0;
  height: 14px;
  border: none;
  outline: none;
  background: none;
}

/* status bar */
.statusbar {
  display: flex;
  align-items: center;
  flex: none;
  height: 22px;
  gap: 4px;
  padding: 4px 0 0 4px;
  border-top: 1px solid #999;
  box-shadow: inset 0 3px 0 #cccccc;
  color: #000;
}
.statusbar button {
  height: 16px;
  padding: 0 1px;
  line-height: 15px;
  border: 1px solid #fff;
  border-right-color: #999;
  border-bottom-color: #ccc;
  white-space: nowrap;
}
.statusbar .on {
  border-color: #000 #fff #ccc #000;
}
.statusbar .en {
  font-size: 10px;
}
.coords {
  width: 250px;
  height: 16px;
  padding-left: 1px;
  border: 1px solid #999;
  border-bottom-color: #ccc;
  font-size: 10px;
  line-height: 16px;
}
.space {
  width: 15px;
}

.cursor {
  position: absolute;
  left: 644px;
  top: 75px;
  width: 13px;
  height: 21px;
  fill: #fff;
  stroke: #000;
}
```
